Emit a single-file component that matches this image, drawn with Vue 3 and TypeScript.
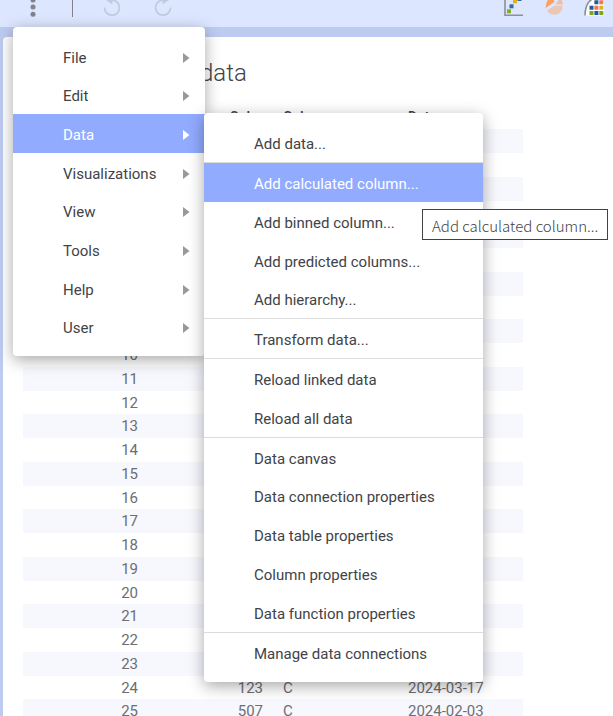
<script setup lang="ts">
interface MenuItem {
  label: string
  divided?: boolean
}

const mainMenu: string[] = ['File', 'Edit', 'Data', 'Visualizations', 'View', 'Tools', 'Help', 'User']

const dataMenu: MenuItem[] = [
  { label: 'Add data...' },
  { label: 'Add calculated column...', divided: true },
  { label: 'Add binned column...' },
  { label: 'Add predicted columns...' },
  { label: 'Add hierarchy...' },
  { label: 'Transform data...', divided: true },
  { label: 'Reload linked data', divided: true },
  { label: 'Reload all data' },
  { label: 'Data canvas', divided: true },
  { label: 'Data connection properties' },
  { label: 'Data table properties' },
  { label: 'Column properties' },
  { label: 'Data function properties' },
  { label: 'Manage data connections', divided: true },
]

const known: Record<number, [string, string, string]> = {
  24: ['123', 'C', '2024-03-17'],
  25: ['507', 'C', '2024-02-03'],
}

const rows = Array.from({ length: 25 }, (_, i) => {
  const id = i + 1
  const [value, group, date] = known[id] ?? ['', '', '']
  return { id, value, group, date }
})
</script>

<template>
  <div class="app">
    <header class="toolbar">
      <button class="tool" aria-label="Menu">
        <svg width="8" height="24" viewBox="0 0 8 24" fill="#80838c">
          <circle cx="4" cy="6" r="2.5" /><circle cx="4" cy="13" r="2.5" /><circle cx="4" cy="20.3" r="2.5" />
        </svg>
      </button>
      <span class="rule"></span>
      <button class="tool undo" aria-label="Undo">
        <svg width="20" height="24" viewBox="0 0 20 24" fill="none" stroke="#c1c9dc" stroke-width="1.7">
          <path d="M2.500 13.500A7.500 7.500 0 1 0 10 6.200" />
          <path d="M10.300 2v8.500L4.500 6.200z" fill="#c1c9dc" stroke="none" />
        </svg>
      </button>
      <button class="tool" aria-label="Redo">
        <svg width="20" height="24" viewBox="0 0 20 24" fill="none" stroke="#c1c9dc" stroke-width="1.7">
          <path d="M17.500 13.500A7.500 7.500 0 1 1 10 6.200" />
          <path d="M9.700 2v8.500l5.800-4.300z" fill="#c1c9dc" stroke="none" />
        </svg>
      </button>
      <span class="spacer"></span>
      <button class="tool" aria-label="Scatter plot">
        <svg width="20" height="24" viewBox="0 0 20 24">
          <path d="M1 3v18.200h18" fill="none" stroke="#8d8f96" stroke-width="1.6" />
          <path d="M3 15.300h4v4H3z" fill="#86ac25" /><path d="M5.500 10.300h4v4h-4z" fill="#366b9d" />
          <path d="M9 5.300h4v4H9z" fill="#dfb21c" /><path d="M13.500 3h4v4h-4z" fill="#366b9d" />
        </svg>
      </button>
      <button class="tool" aria-label="Pie chart">
        <svg width="20" height="24" viewBox="0 0 20 24">
          <path d="M1.700 14Q1.500 6 8 2l2.500 6z" fill="#ffa05f" />
          <path d="M11.300 10.500L16 4.500q3 2 2.700 6z" fill="#f0bda5" />
          <path d="M3 16.500l7.500-4.700h8.200q-.7 8.900-8.200 8.900Q5 20.700 3 16.500z" fill="#ebc7b8" />
        </svg>
      </button>
      <button class="tool" aria-label="Colored grid">
        <svg width="20" height="24" viewBox="0 0 20 24">
          <path d="M1 21.500Q1 8 10 4h10v17.500z" fill="#fff" />
          <path d="M1 21.500Q1 9 9 4.500" fill="none" stroke="#8d8f96" stroke-width="1.6" />
          <path d="M5.500 17h4v4h-4zM15.300 17h4v4h-4z" fill="#80a61c" />
          <path d="M10.400 17h4v4h-4zM5.500 11.700h4v4h-4zM10.400 6.300h4v4h-4z" fill="#235a93" />
          <path d="M10.400 11.700h4v4h-4zM15.300 6.300h4v4h-4z" fill="#ee7658" />
          <path d="M15.300 11.700h4v4h-4z" fill="#dfb21c" />
        </svg>
      </button>
    </header>

    <main class="page">
      <h1 class="title">data</h1>
      <table class="grid">
        <thead>
          <tr><th class="id"></th><th class="value">Color</th><th class="group">Column</th><th class="date">Date</th></tr>
        </thead>
        <tbody>
          <tr v-for="row in rows" :key="row.id">
            <td class="id">{{ row.id }}</td>
            <td class="value">{{ row.value }}</td>
            <td class="group">{{ row.group }}</td>
            <td class="date">{{ row.date }}</td>
          </tr>
        </tbody>
      </table>
    </main>

    <nav class="menu main-menu" aria-label="Main menu">
      <ul>
        <li v-for="label in mainMenu" :key="label" :class="{ active: label === 'Data' }">
          <button>
            <span>{{ label }}</span>
            <svg width="7" height="10" viewBox="0 0 7 10" fill="currentColor"><path d="M0 0l6.500 5L0 10z" /></svg>
          </button>
        </li>
      </ul>
    </nav>

    <nav class="menu sub-menu" aria-label="Data menu">
      <ul>
        <li
          v-for="item in dataMenu"
          :key="item.label"
          :class="{ divided: item.divided, active: item.label === 'Add calculated column...' }"
        >
          <button>{{ item.label }}</button>
        </li>
      </ul>
    </nav>

    <div class="tooltip" role="tooltip">Add calculated column...</div>
  </div>
</template>

<style>
body {
  margin: 0;
  background: #bdcbf1;
}
</style>

<style scoped>
.app {
  position: relative;
  height: 100vh;
  overflow: hidden;
  display: flex;
  flex-direction: column;
  font-family: Roboto, "Liberation Sans", sans-serif;
  color: #414347;
}
button {
  border: 0;
  margin: 0;
  padding: 0;
  background: none;
  font: inherit;
  color: inherit;
}
.toolbar {
  flex: none;
  height: 27px;
  box-sizing: border-box;
  padding: 0 9px 0 29px;
  display: flex;
  align-items: flex-start;
  background: #dce6fe;
}
.tool {
  display: flex;
  margin-top: -6px;
}
.rule {
  width: 1px;
  height: 17px;
  margin: 0 29px 0 35px;
  background: #80838c;
}
.undo {
  margin-right: 31px;
}
.spacer {
  flex: 1;
}
.toolbar .spacer ~ .tool + .tool {
  margin-left: 20px;
}
.page {
  flex: 1;
  min-height: 0;
  margin: 10px 0 0 3px;
  padding: 20px 90px 0 20px;
  overflow: hidden;
  border-radius: 4px 0 0 0;
  background: #fff;
}
.title {
  margin: 0 0 16px;
  padding-left: 177px;
  font-size: 24px;
  line-height: 32px;
  font-weight: 300;
  color: #414347;
}
.grid {
  width: 100%;
  table-layout: fixed;
  border-collapse: collapse;
  font-size: 15px;
  line-height: 22px;
  color: #6c6e74;
}
.grid tr {
  height: 24px;
}
.grid tbody tr:nth-child(4n) {
  height: 23px;
}
.grid tbody tr:nth-child(odd) {
  background: #f7f8fe;
}
.grid th,
.grid td {
  padding: 0;
  text-align: left;
}
.grid th {
  font-weight: 500;
  font-size: 14px;
  color: #414347;
}
.grid .id {
  width: 115px;
  text-align: right;
}
.grid .value {
  width: 125px;
  text-align: right;
}
.grid .group {
  width: 125px;
  padding-left: 20px;
}
.menu {
  position: absolute;
  box-sizing: border-box;
  padding: 10px 0;
  border-radius: 4px;
  background: #fff;
  box-shadow: 0 4px 16px rgba(0, 0, 0, 0.35);
  font-size: 15px;
}
.menu ul {
  margin: 0;
  padding: 0;
  list-style: none;
}
.menu button {
  display: flex;
  align-items: center;
  justify-content: space-between;
  width: 100%;
  height: 39px;
  padding: 2px 15px 0 50px;
  text-align: left;
}
.menu svg {
  color: #97999c;
}
.menu .active,
.menu .active svg {
  color: #fff;
}
.menu .active button {
  background: #91abff;
}
.main-menu {
  left: 13px;
  top: 27px;
  width: 192px;
}
.main-menu li:nth-child(3n + 2) button,
.sub-menu li:nth-child(5n) button {
  height: 38px;
}
.sub-menu {
  left: 204px;
  top: 113px;
  width: 279px;
}
.divided {
  border-top: 1px solid #dcdcdc;
}
.tooltip {
  position: absolute;
  left: 422px;
  top: 209px;
  padding: 4px 9px 1px;
  border: 1px solid #414347;
  background: #fff;
  font-family: "Noto Sans CJK KR", "Noto Sans", sans-serif;
  font-size: 15px;
  font-weight: 300;
  line-height: 24px;
  color: #414347;
  white-space: nowrap;
}
</style>
